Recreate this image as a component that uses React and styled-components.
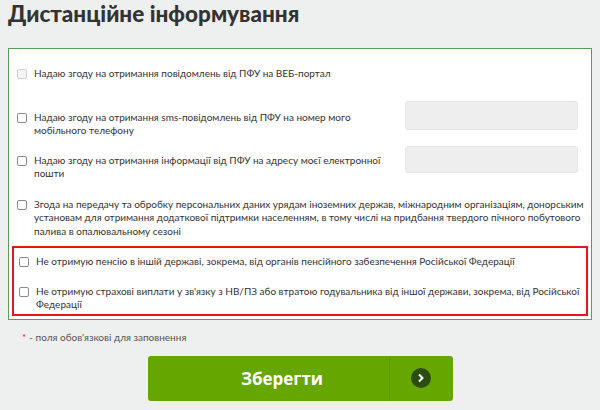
import styled, { createGlobalStyle } from "styled-components"

const GlobalStyle = createGlobalStyle`
* {
  box-sizing: border-box;
}
body {
  margin: 0;
  background: #eef0ef;
  font-family: Lato, "Open Sans", sans-serif;
}
`

const Page = styled.div`
  padding: 0 8px;
`

const Title = styled.h1`
  margin: 0;
  height: 48px;
  font-family: Lato, sans-serif;
  font-size: 22.5px;
  font-weight: 900;
  color: #333;
  line-height: 28px;
`

const Box = styled.div`
  background: #fff;
  border: 1px solid #5e9a5e;
  padding: 18px 3px 3px 3px;
`

const Row = styled.div`
  display: flex;
  align-items: flex-start;
  padding-left: 5px;
  padding-top: ${p => p.$top || 0}px;
`

const Label = styled.label`
  display: flex;
  align-items: flex-start;
  gap: 7px;
  padding-top: ${p => p.$shift || 0}px;
  width: ${p => p.$width || "auto"};
  font-size: 10px;
  line-height: 13.5px;
  color: #333;
`

const Check = styled.span`
  flex: none;
  width: 10px;
  height: 10px;
  margin-top: 2px;
  border: 1px solid ${p => (p.$disabled ? "#d0d0d0" : "#8a8a8a")};
  background: ${p => (p.$disabled ? "#f4f4f4" : "#fff")};
  border-radius: 2px;
`

const Field = styled.div`
  margin-left: auto;
  margin-right: 10px;
  width: 173px;
  height: ${p => p.$h}px;
  background: #eeeeee;
  border: 1px solid #e6e6e6;
  border-radius: 3px;
`

const Marked = styled.div`
  border: 2px solid #e8141c;
  padding: 7px 0 2px 0;
  margin-top: 8px;
  display: flex;
  flex-direction: column;
  gap: 16px;
`

const Note = styled.div`
  padding: 11px 0 0 14px;
  font-size: 10px;
  color: #555;
  span {
    color: #e8141c;
    margin-right: 3px;
  }
`

const Button = styled.button`
  display: flex;
  margin: 13px auto 0;
  width: 305px;
  height: 45px;
  padding: 0;
  border: none;
  border-radius: 3px;
  background: #66a600;
  cursor: pointer;
`

const ButtonText = styled.span`
  flex: 1;
  align-self: center;
  padding-left: 28px;
  font-family: "Open Sans", sans-serif;
  font-weight: 700;
  font-size: 17px;
  color: #fff;
`

const ButtonIcon = styled.span`
  width: 64px;
  display: flex;
  align-items: center;
  justify-content: center;
  border-left: 1px solid #5f9b00;
`

const Circle = styled.span`
  width: 20px;
  height: 20px;
  border-radius: 50%;
  background: #2b4d0f;
  display: flex;
  align-items: center;
  justify-content: center;
`

const App = () => {
  return (
    <>
      <GlobalStyle />
      <Page>
        <Title>Дистанційне інформування</Title>
        <Box>
          <Row>
            <Label>
              <Check $disabled />
              Надаю згоду на отримання повідомлень від ПФУ на ВЕБ-портал
            </Label>
          </Row>
          <Row $top={20}>
            <Label $shift={10} $width="345px">
              <Check />
              Надаю згоду на отримання sms-повідомлень від ПФУ на номер мого мобільного телефону
            </Label>
            <Field $h={29} />
          </Row>
          <Row $top={8}>
            <Label $shift={8} $width="376px">
              <Check />
              Надаю згоду на отримання інформації від ПФУ на адресу моєї електронної пошти
            </Label>
            <Field $h={27} />
          </Row>
          <Row $top={17}>
            <Label $width="570px">
              <Check />
              Згода на передачу та обробку персональних даних урядам іноземних держав, міжнародним організаціям, донорським установам для отримання додаткової підтримки населенням, в тому числі на придбання твердого пічного побутового палива в опалювальному сезоні
            </Label>
          </Row>
          <Marked>
            <Row $top={0}>
              <Label>
                <Check />
                Не отримую пенсію в іншій державі, зокрема, від органів пенсійного забезпечення Російської Федерації
              </Label>
            </Row>
            <Row>
              <Label $width="570px">
                <Check />
                Не отримую страхові виплати у зв'язку з НВ/ПЗ або втратою годувальника від іншої держави, зокрема, від Російської Федерації
              </Label>
            </Row>
          </Marked>
        </Box>
        <Note>
          <span>*</span>- поля обов'язкові для заповнення
        </Note>
        <Button>
          <ButtonText>Зберегти</ButtonText>
          <ButtonIcon>
            <Circle>
              <svg width="8" height="10" viewBox="0 0 8 10">
                <path d="M2 1.5 L5.5 5 L2 8.5" fill="none" stroke="#fff" strokeWidth="2" />
              </svg>
            </Circle>
          </ButtonIcon>
        </Button>
      </Page>
    </>
  )
}

export default App
